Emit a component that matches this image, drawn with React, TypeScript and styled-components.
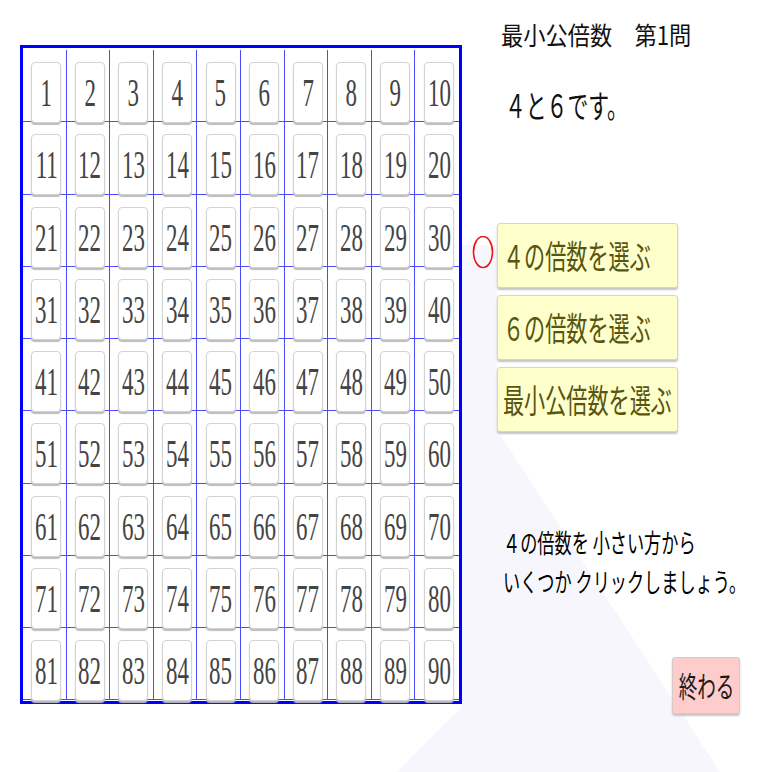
import React from 'react';
import styled, { createGlobalStyle } from 'styled-components';

const GlobalStyle = createGlobalStyle`
  html, body {
    margin: 0;
    padding: 0;
    background: #ffffff;
  }
  body {
    font-family: "Noto Sans CJK JP", "Noto Sans", sans-serif;
  }
`;

const Page = styled.div`
  position: relative;
  width: 772px;
  height: 772px;
  display: flex;
  align-items: flex-start;
  overflow: hidden;
`;

const Backdrop = styled.svg`
  position: absolute;
  left: 0;
  top: 0;
  z-index: 0;
`;

const Board = styled.div`
  position: relative;
  z-index: 1;
  flex: 0 0 auto;
  margin: 45px 0 0 20px;
  width: 442px;
  box-sizing: border-box;
  border: 3px solid #0000ff;
  padding: 2px 0 1px 0;
  display: grid;
  grid-template-columns: repeat(10, 43.6px);
  grid-template-rows: repeat(9, 72.25px);
  background: #ffffff;
`;

const Cell = styled.div<{ $lastCol: boolean }>`
  box-sizing: border-box;
  display: flex;
  justify-content: center;
  align-items: flex-start;
  padding: 12px 0 0 4px;
  border-bottom: 1px solid #4c4cff;
  border-right: ${(p) => (p.$lastCol ? 'none' : '1px solid #4c4cff')};
  min-width: 0;
`;

const Card = styled.div`
  box-sizing: border-box;
  flex: 0 0 30px;
  width: 30px;
  height: 61px;
  background: #ffffff;
  border: 1px solid #d2d2d2;
  border-radius: 4px;
  box-shadow: 0 2px 1px #bdbdbd;
  display: flex;
  align-items: center;
  justify-content: center;
  overflow: visible;
`;

const Num = styled.span`
  display: inline-block;
  font-family: "Liberation Serif", "Times New Roman", serif;
  font-size: 41px;
  line-height: 1;
  color: #444444;
  transform: scaleX(0.56);
  white-space: nowrap;
`;

const Panel = styled.div`
  position: relative;
  z-index: 1;
  flex: 1 1 0;
  min-width: 0;
  display: flex;
  flex-direction: column;
  align-items: flex-start;
  padding-top: 22px;
`;

const Squeeze = styled.span<{ $sx: number; $origin?: string }>`
  display: inline-block;
  white-space: nowrap;
  transform: scaleX(${(p) => p.$sx});
  transform-origin: ${(p) => p.$origin ?? 'left center'};
`;

const Title = styled.div`
  margin-left: 39px;
  font-size: 25px;
  line-height: 1;
  color: #111111;
`;

const Question = styled.div`
  margin: 41px 0 0 43px;
  font-size: 32px;
  line-height: 1;
  color: #111111;
`;

const ChoiceRow = styled.div`
  display: flex;
  margin: 103px 0 0 10px;
`;

const Marker = styled.div`
  width: 25px;
  padding-top: 13px;
`;

const Choices = styled.div`
  display: flex;
  flex-direction: column;
  gap: 7px;
`;

const ChoiceButton = styled.div`
  box-sizing: border-box;
  width: 181px;
  height: 65px;
  background: #ffffcc;
  border: 1px solid #d6d6c8;
  border-radius: 3px;
  box-shadow: 0 2px 2px #c4c4c4;
  display: flex;
  align-items: center;
  padding-left: 5px;
  font-size: 33px;
  line-height: 1;
  color: #57550f;
  overflow: visible;
`;

const Hint = styled.div`
  margin: 91px 0 0 41px;
  font-size: 26px;
  line-height: 38.5px;
  color: #000000;
  text-shadow: 0 0 2px #ffffff, 0 0 2px #ffffff;
`;

const HintLine = styled.div`
  display: block;
`;

const EndButton = styled.div`
  align-self: flex-end;
  margin: 57px 32px 0 0;
  box-sizing: border-box;
  width: 68px;
  height: 57px;
  background: #ffcccc;
  border: 1px solid #d8c8c8;
  border-radius: 3px;
  box-shadow: 0 2px 2px #c4c4c4;
  display: flex;
  align-items: center;
  justify-content: center;
  font-size: 29px;
  line-height: 1;
  color: #1a1a1a;
`;

const numbers = Array.from({ length: 90 }, (_, i) => i + 1);

const choices = ['４の倍数を選ぶ', '６の倍数を選ぶ', '最小公倍数を選ぶ'];

export default function App() {
  return (
    <>
      <GlobalStyle />
      <Page>
        <Backdrop width="772" height="772" viewBox="0 0 772 772">
          <polygon
            points="462,245 497,245 497,430 720,772 397,772 462,707"
            fill="#f6f6fc"
          />
        </Backdrop>
        <Board>
          {numbers.map((n) => (
            <Cell key={n} $lastCol={n % 10 === 0}>
              <Card>
                <Num>{n}</Num>
              </Card>
            </Cell>
          ))}
        </Board>
        <Panel>
          <Title>
            <Squeeze $sx={0.89}>最小公倍数　第1問</Squeeze>
          </Title>
          <Question>
            <Squeeze $sx={0.65}>４と６です。</Squeeze>
          </Question>
          <ChoiceRow>
            <Marker>
              <svg width="24" height="34" viewBox="0 0 24 34">
                <ellipse cx="11" cy="16" rx="9.5" ry="15.5" fill="none" stroke="#e81818" strokeWidth="1.6" />
              </svg>
            </Marker>
            <Choices>
              {choices.map((c) => (
                <ChoiceButton key={c}>
                  <Squeeze $sx={0.64}>{c}</Squeeze>
                </ChoiceButton>
              ))}
            </Choices>
          </ChoiceRow>
          <Hint>
            <HintLine>
              <Squeeze $sx={0.66}>４の倍数を 小さい方から</Squeeze>
            </HintLine>
            <HintLine>
              <Squeeze $sx={0.66}>いくつか クリックしましょう。</Squeeze>
            </HintLine>
          </Hint>
          <EndButton>
            <Squeeze $sx={0.64} $origin="center">終わる</Squeeze>
          </EndButton>
        </Panel>
      </Page>
    </>
  );
}
